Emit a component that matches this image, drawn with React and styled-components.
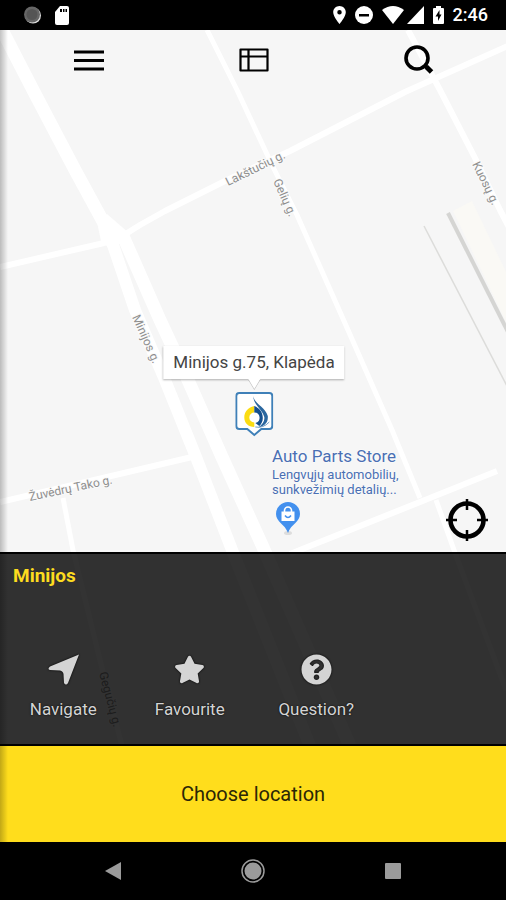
import React from 'react';
import styled, { createGlobalStyle } from 'styled-components';
import { FaStar, FaQuestionCircle } from 'react-icons/fa';

const GlobalStyle = createGlobalStyle`
  * {
    box-sizing: border-box;
  }

  body {
    margin: 0;
    background: #000;
    font-family: Roboto, 'Noto Sans', sans-serif;
  }

  button {
    padding: 0;
    border: none;
    background: none;
    color: inherit;
    font: inherit;
    cursor: pointer;
  }

  svg {
    display: block;
  }
`;

const Screen = styled.div`
  display: flex;
  flex-direction: column;
  min-height: 100vh;
`;

const StatusBar = styled.header`
  display: flex;
  justify-content: space-between;
  align-items: center;
  height: 30px;
  padding: 0 18px 0 24px;
  background: #000;
  color: #fff;
`;

const StatusGroup = styled.div`
  display: flex;
  align-items: center;
  gap: ${(props) => props.$gap}px;
`;

const Clock = styled.time`
  font-size: 18px;
  font-weight: 500;
  line-height: 20px;
`;

const AppBody = styled.div`
  position: relative;
  flex: 1;
  display: flex;
  flex-direction: column;

  /* shadow of the closed drawer */
  &::after {
    content: '';
    position: absolute;
    inset: 0 auto 0 0;
    width: 8px;
    background: linear-gradient(to right, rgba(0, 0, 0, 0.24), rgba(0, 0, 0, 0));
    pointer-events: none;
  }
`;

const MapArea = styled.main`
  position: relative;
  flex: 1;
  display: flex;
  flex-direction: column;
  overflow: hidden;
  background: #f6f6f6;
`;

const MapCanvas = styled.svg`
  position: absolute;
  inset: 0;
  width: 100%;
  height: 100%;
`;

const Toolbar = styled.nav`
  position: relative;
  display: grid;
  grid-template-columns: repeat(3, 1fr);
  padding: 0 4px 0 6px;
`;

const ToolButton = styled.button`
  display: flex;
  justify-content: center;
  align-items: center;
  height: 60px;
  color: #000;
`;

const Marker = styled.div`
  position: absolute;
  top: 316px;
  left: 50%;
  display: flex;
  flex-direction: column;
  align-items: center;
  margin-left: 1px;
  transform: translateX(-50%);
`;

const Callout = styled.div`
  position: relative;
  height: 33px;
  margin-bottom: 13px;
  padding: 0 10px;
  background: #fff;
  box-shadow: 0 1px 2px rgba(0, 0, 0, 0.3);
  color: #444;
  font-size: 17px;
  line-height: 33px;
  white-space: nowrap;

  &::after {
    content: '';
    position: absolute;
    top: 100%;
    left: 50%;
    margin-left: -6px;
    border: 6px solid transparent;
    border-top: 10px solid #fff;
    border-bottom: none;
    filter: drop-shadow(0 1px 0 rgba(0, 0, 0, 0.25));
  }
`;

const Place = styled.div`
  position: absolute;
  top: 415px;
  left: 272px;
  color: #4a6fb3;
  text-shadow: 0 0 2px #fff, 0 0 2px #fff;
`;

const PlaceName = styled.div`
  font-size: 17px;
  line-height: 22px;
`;

const PlaceInfo = styled.div`
  margin-bottom: 5px;
  font-size: 13px;
  line-height: 15px;
`;

const PlacePin = styled.svg`
  margin-left: 4px;
`;

const LocateButton = styled.button`
  position: relative;
  align-self: flex-end;
  margin: auto 18px 11px 0;
`;

const Details = styled.section`
  position: relative;
  display: flex;
  flex-direction: column;
  justify-content: space-between;
  min-height: 194px;
  padding: 10px 0 25px;
  border-top: 2px solid #000;
  border-bottom: 2px solid #000;
  background: rgba(0, 0, 0, 0.8);
`;

const DetailsTitle = styled.h1`
  margin: 0;
  padding: 0 13px;
  color: #fddc1f;
  font-size: 19px;
  font-weight: 700;
  line-height: 24px;
`;

const Actions = styled.div`
  display: grid;
  grid-template-columns: repeat(4, 1fr);
`;

const ActionButton = styled.button`
  display: flex;
  flex-direction: column;
  align-items: center;
  gap: 14px;
  color: #d4d4d4;
  font-size: 17px;
  line-height: 20px;
  text-shadow: 0 0 2px #000;

  svg {
    filter: drop-shadow(0 0 1px #000);
  }
`;

const ChooseButton = styled.button`
  height: 96px;
  background: #ffdd1c;
  color: #2b2606;
  font-size: 20px;
`;

const SystemNav = styled.footer`
  display: flex;
  justify-content: space-between;
  align-items: center;
  height: 58px;
  padding: 0 101px;
  background: #000;
  color: #9b9b9b;
`;

const SystemButton = styled.button`
  display: flex;
  justify-content: center;
  align-items: center;
  width: 24px;
  height: 24px;
`;

const StreetName = styled.text`
  fill: #8e8e8e;
  stroke: #fafafa;
  stroke-width: 2px;
  paint-order: stroke;
  font-size: 12px;
`;

const streets = [
  { name: 'Lakštučių g.', x: 228, y: 186, angle: -26 },
  { name: 'Gelių g.', x: 273, y: 181, angle: 66 },
  { name: 'Kuosų g.', x: 472, y: 164, angle: 64 },
  { name: 'Minijos g.', x: 132, y: 317, angle: 66 },
  { name: 'Žuvėdrų Tako g.', x: 30, y: 501, angle: -12 },
  { name: 'Gegučių g.', x: 99, y: 673, angle: 75 },
];

const StreetMap = () => (
  <MapCanvas viewBox="0 30 506 716" preserveAspectRatio="xMidYMin slice" aria-hidden="true">
    {/* railway */}
    <path d="M453 211 472 201 506 272V322Z" fill="#faf9f5" />
    <path d="M448 213 508 332" stroke="#d5d5d3" strokeWidth="4" />
    <path d="M424 226 508 388" stroke="#dcdcda" strokeWidth="1.5" />

    <g fill="none" stroke="#fff" strokeLinejoin="round">
      <path d="M0 26 33 90 75 170 112 238" strokeWidth="13" />
      <path d="M108 235 113 245 135 310 165 380 196 457 232 550 310 746" strokeWidth="12" />
      <path d="M123 236 160 320 188 380 222 457 262 545 350 746" strokeWidth="13" />
      <path d="M0 267 104 243M124 235 140 225 165 211 225 181 253 168 290 151 405 92 510 45" strokeWidth="6" />
      <path d="M207 30 237 90 272 165 297 215 348 330 392 430 420 498" strokeWidth="5" />
      <path d="M408 30 440 90 475 158 500 210 512 233" strokeWidth="6" />
      <path d="M0 502 192 457" strokeWidth="6" />
      <path d="M63 498 73 550 100 660 122 746" strokeWidth="5" />
      <path d="M290 554 430 498 497 471" strokeWidth="6" />
      <path d="M436 500 454 550 506 690" strokeWidth="5" />
    </g>
    {/* junction of Minijos and Lakštučių */}
    <path d="M97 222 107 214 129 233 130 240 120 244 102 246Z" fill="#fff" />

    {streets.map(({ name, x, y, angle }) => (
      <StreetName key={name} transform={`translate(${x} ${y}) rotate(${angle})`}>
        {name}
      </StreetName>
    ))}
  </MapCanvas>
);

const LogoPin = () => (
  <svg width="38" height="45" viewBox="0 0 38 45" aria-hidden="true">
    <path
      d="M4 1H34Q37 1 37 4V34Q37 37 34 37H26L19 43 12 37H4Q1 37 1 34V4Q1 1 4 1Z"
      fill="#fff"
      stroke="#3f80b8"
      strokeWidth="2"
    />
    <path d="M19 14C12 16 9 20 9 25.500 9 31 13 35 19 35L19 30.500A5 5 0 0 1 19 20.500Z" fill="#fbdc12" />
    <path d="M19 14C24 16 27.500 20 27.500 26 27.500 29.500 26 32 24 34L20 31A5.300 5.300 0 0 0 19 20.500Z" fill="#14508f" />
    <path d="M18 4C19 12 30 15 32.500 24 33 30 30 34 23 35.500 27.500 32 29.500 29 29 25 27 17 18 13 18 4Z" fill="#2a679f" />
    <path d="M20 35Q28 36.500 34 30" fill="none" stroke="#6f9dc4" strokeWidth="1" />
  </svg>
);

const App = () => {
  return (
    <>
      <GlobalStyle />
      <Screen>
        <StatusBar>
          <StatusGroup $gap={14}>
            <svg width="17" height="18" viewBox="0 0 17 18" aria-hidden="true">
              <circle cx="9" cy="9.500" r="8" fill="#ddd" />
              <circle cx="8" cy="8.500" r="8" fill="#666" />
              <circle cx="8" cy="8.500" r="5.500" fill="#555" />
            </svg>
            <svg width="14" height="19" viewBox="0 0 14 19" aria-hidden="true">
              <path d="M5 0H12Q14 0 14 2V17Q14 19 12 19H2Q0 19 0 17V6Z" fill="#fff" />
              <path d="M5 3H7V6H5ZM8 3H9.500V6H8ZM10.500 3H12V6H10.500Z" fill="#000" />
            </svg>
          </StatusGroup>
          <StatusGroup $gap={9}>
            <svg width="13" height="18" viewBox="5 2 14 20" fill="#fff" aria-hidden="true">
              <path d="M12 2C8.130 2 5 5.130 5 9c0 5.250 7 13 7 13s7-7.750 7-13c0-3.870-3.130-7-7-7zm0 9.500a2.500 2.500 0 1 1 0-5 2.500 2.500 0 0 1 0 5z" />
            </svg>
            <svg width="18" height="18" viewBox="0 0 18 18" aria-hidden="true">
              <circle cx="9" cy="9" r="9" fill="#fff" />
              <path d="M4 8H14V10.500H4Z" fill="#000" />
            </svg>
            <StatusGroup $gap={3}>
              <svg width="22" height="18" viewBox="0 0 22 18" fill="#fff" aria-hidden="true">
                <path d="M0 4Q11-4 22 4L11 18Z" />
              </svg>
              <svg width="17" height="18" viewBox="0 0 17 18" fill="#fff" aria-hidden="true">
                <path d="M17 0V18H0Z" />
              </svg>
            </StatusGroup>
            <svg width="11" height="18" viewBox="0 0 11 18" aria-hidden="true">
              <path d="M3 0H8V2H10Q11 2 11 3V17Q11 18 10 18H1Q0 18 0 17V3Q0 2 1 2H3Z" fill="#fff" />
              <path d="M6.500 4 2.500 10.500H5V15L8.500 8.500H6.500Z" fill="#000" />
            </svg>
            <Clock>2:46</Clock>
          </StatusGroup>
        </StatusBar>

        <AppBody>
          <MapArea>
            <StreetMap />

            <Toolbar>
              <ToolButton aria-label="Menu">
                <svg width="30" height="21" viewBox="0 0 30 21">
                  <path d="M0 2H30M0 10.500H30M0 19H30" stroke="#000" strokeWidth="2.800" />
                </svg>
              </ToolButton>
              <ToolButton aria-label="List">
                <svg width="30" height="24" viewBox="0 0 30 24">
                  <path
                    d="M1.500 1.500H28.500V22.500H1.500ZM1.500 8.500H28.500M9.500 1.500V22.500"
                    fill="none"
                    stroke="#000"
                    strokeWidth="2.200"
                    strokeLinejoin="round"
                  />
                </svg>
              </ToolButton>
              <ToolButton aria-label="Search">
                <svg width="30" height="30" viewBox="0 0 30 30" fill="none" stroke="#000">
                  <circle cx="13" cy="13" r="11" strokeWidth="3.600" />
                  <path d="M21 20.500 23 22.500" strokeWidth="4" />
                  <path d="M22.500 22 27.500 27" strokeWidth="5" />
                </svg>
              </ToolButton>
            </Toolbar>

            <Marker>
              <Callout>Minijos g.75, Klapėda</Callout>
              <LogoPin />
            </Marker>

            <Place>
              <PlaceName>Auto Parts Store</PlaceName>
              <PlaceInfo>
                Lengvųjų automobilių,
                <br />
                sunkvežimių detalių...
              </PlaceInfo>
              <PlacePin width="24" height="34" viewBox="0 0 24 34" aria-hidden="true">
                <ellipse cx="12" cy="31" rx="4" ry="2" fill="#ddd" />
                <path d="M12 0a12 12 0 0 1 12 12c0 8-9 10-12 19C9 22 0 20 0 12A12 12 0 0 1 12 0Z" fill="#4390ee" />
                <path d="M8.500 10V8.500a3.500 3.500 0 0 1 7 0V10" fill="none" stroke="#fff" strokeWidth="1.600" />
                <path d="M5.500 9.500H18.500V19H5.500Z" fill="#fff" />
                <path d="M9 13.500Q12 17.500 15 13.500" fill="none" stroke="#4390ee" strokeWidth="1.500" />
              </PlacePin>
            </Place>

            <LocateButton aria-label="My location">
              <svg width="42" height="42" viewBox="0 0 42 42" fill="none" stroke="#000">
                <circle cx="21" cy="21" r="16.500" strokeWidth="4.600" />
                <path d="M21 0V11M21 31V42M0 21H11M31 21H42" strokeWidth="2.500" />
              </svg>
            </LocateButton>

            <Details>
              <DetailsTitle>Minijos</DetailsTitle>
              <Actions>
                <ActionButton>
                  <svg width="31" height="31" viewBox="0 0 31 31" fill="currentColor" aria-hidden="true">
                    <path d="M31 0.500 20 29Q18 32 16 29L15.500 20Q15 17 12 16.500L2 16Q-1 15 2 12.500Z" />
                  </svg>
                  Navigate
                </ActionButton>
                <ActionButton>
                  <FaStar size={31} aria-hidden="true" />
                  Favourite
                </ActionButton>
                <ActionButton>
                  <FaQuestionCircle size={31} aria-hidden="true" />
                  Question?
                </ActionButton>
              </Actions>
            </Details>
          </MapArea>

          <ChooseButton>Choose location</ChooseButton>
        </AppBody>

        <SystemNav>
          <SystemButton aria-label="Back">
            <svg width="16" height="18" viewBox="0 0 16 18" fill="currentColor">
              <path d="M16 0V18L0 9Z" />
            </svg>
          </SystemButton>
          <SystemButton aria-label="Home">
            <svg width="24" height="24" viewBox="0 0 24 24" fill="currentColor">
              <circle cx="12" cy="12" r="8.500" />
              <circle cx="12" cy="12" r="11" fill="none" stroke="currentColor" strokeWidth="1.500" />
            </svg>
          </SystemButton>
          <SystemButton aria-label="Recent apps">
            <svg width="16" height="16" viewBox="0 0 16 16" fill="currentColor">
              <rect width="16" height="16" rx="1" />
            </svg>
          </SystemButton>
        </SystemNav>
      </Screen>
    </>
  );
};

export default App;
